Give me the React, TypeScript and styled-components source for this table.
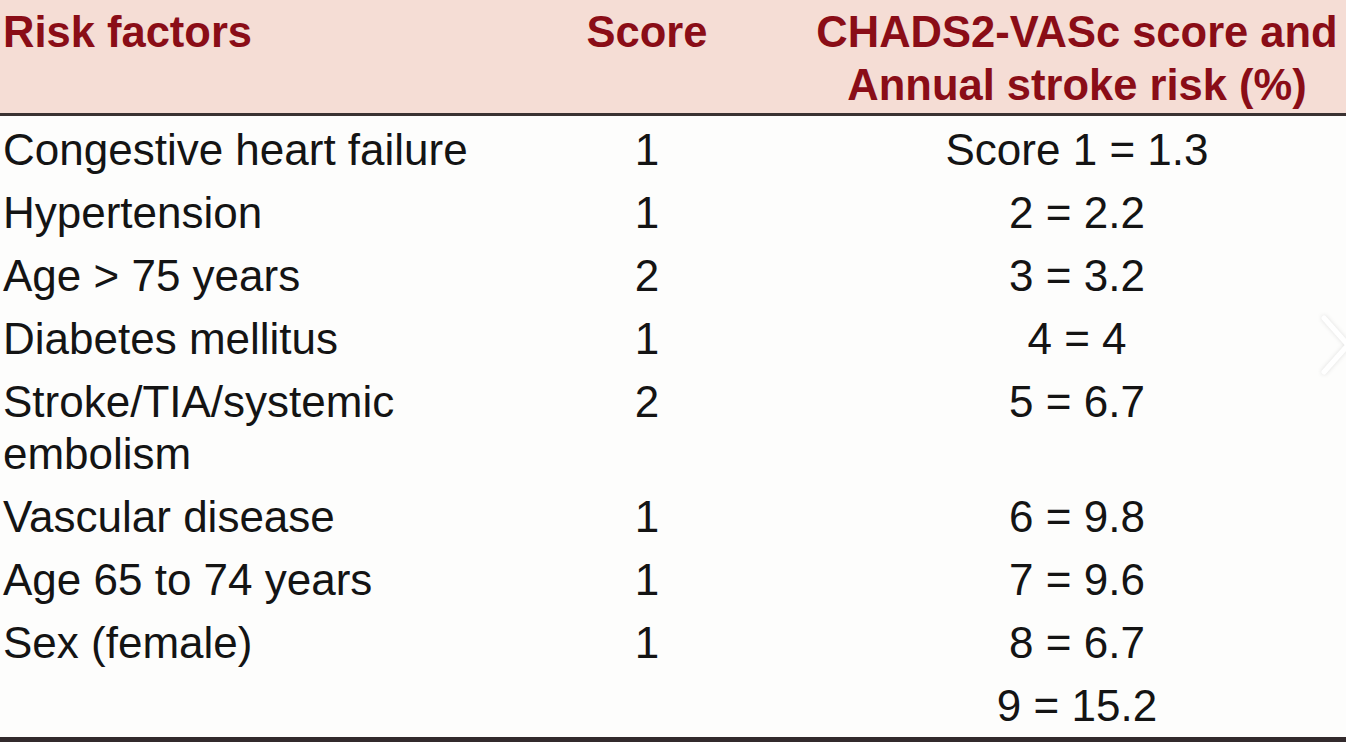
import styled, { createGlobalStyle } from 'styled-components';

const GlobalStyle = createGlobalStyle`
	html, body {
		margin: 0;
		padding: 0;
		background: #fdfdfc;
	}
`;

const Page = styled.div`
	position: relative;
	width: 1346px;
	height: 742px;
	overflow: hidden;
	background: #fdfdfc;
	font-family: 'Liberation Sans', Arial, sans-serif;
`;

const Table = styled.table`
	width: 1346px;
	border-collapse: collapse;
	table-layout: fixed;
	border-bottom: 5px solid #322a2c;

	tbody tr:last-child td {
		padding-bottom: 5px;
	}
`;

const HeadRow = styled.tr`
	background: #f5ddd5;
	border-bottom: 3px solid #3a3232;
`;

const HeadCell = styled.th<{ $align?: string }>`
	height: 113px;
	box-sizing: border-box;
	padding: 6px 0 1px ${({ $align }) => ($align === 'left' ? '3px' : '0')};
	vertical-align: top;
	text-align: ${({ $align }) => $align || 'center'};
	font-size: 43.5px;
	line-height: 53px;
	font-weight: bold;
	color: #8a0d17;
	white-space: nowrap;
`;

const Cell = styled.td<{ $align?: string }>`
	padding: 8px 0 3px ${({ $align }) => ($align === 'left' ? '3px' : '0')};
	vertical-align: top;
	text-align: ${({ $align }) => $align || 'center'};
	font-size: 44px;
	line-height: 52px;
	color: #141414;
`;

const NextArrow = styled.div`
	position: absolute;
	right: -4px;
	top: 312px;
	width: 30px;
	height: 66px;
	filter: drop-shadow(0 0 2px rgba(0, 0, 0, 0.12));
`;

const rows: [string, string, string][] = [
	['Congestive heart failure', '1', 'Score 1 = 1.3'],
	['Hypertension', '1', '2 = 2.2'],
	['Age > 75 years', '2', '3 = 3.2'],
	['Diabetes mellitus', '1', '4 = 4'],
	['Stroke/TIA/systemic embolism', '2', '5 = 6.7'],
	['Vascular disease', '1', '6 = 9.8'],
	['Age 65 to 74 years', '1', '7 = 9.6'],
	['Sex (female)', '1', '8 = 6.7'],
	['', '', '9 = 15.2'],
];

const App = () => {
	return (
		<Page>
			<GlobalStyle />
			<Table>
				<colgroup>
					<col style={{ width: 486 }} />
					<col style={{ width: 322 }} />
					<col style={{ width: 538 }} />
				</colgroup>
				<thead>
					<HeadRow>
						<HeadCell $align="left">Risk factors</HeadCell>
						<HeadCell>Score</HeadCell>
						<HeadCell>
							CHADS2-VASc score and
							<br />
							Annual stroke risk (%)
						</HeadCell>
					</HeadRow>
				</thead>
				<tbody>
					{rows.map(([factor, score, risk]) => (
						<tr key={risk}>
							<Cell $align="left">{factor}</Cell>
							<Cell>{score}</Cell>
							<Cell>{risk}</Cell>
						</tr>
					))}
				</tbody>
			</Table>
			<NextArrow>
				<svg width="30" height="66" viewBox="0 0 30 66">
					<polyline
						points="4,6 28,33 4,60"
						fill="none"
						stroke="#ffffff"
						strokeWidth="5"
						strokeLinecap="round"
						strokeLinejoin="round"
					/>
				</svg>
			</NextArrow>
		</Page>
	);
};

export default App;
